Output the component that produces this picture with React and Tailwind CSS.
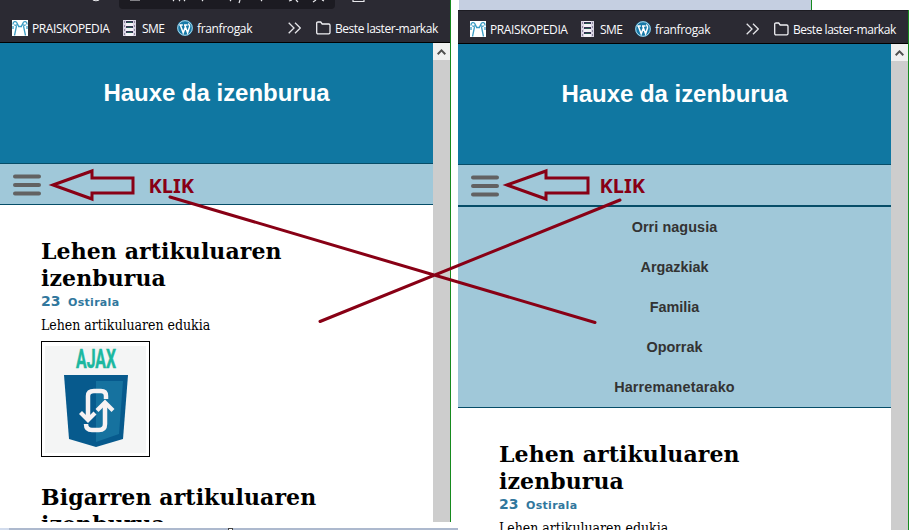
import React from "react";

function Praisko() {
  return (
    <svg width="16" height="16" viewBox="0 0 16 16" className="block shrink-0 bg-white" fill="none" stroke="#3b9cc4" strokeWidth="1.3">
      <path d="M1.200 4.500C.5 1.500 4 .5 5 3S3 6 2.500 4.500M5 3l1.500 3M4.500 6L2.500 15.500M14.800 4.500C15.500 1.500 12 .5 11 3s2 3 2.500 1.500M11 3L9.500 6M11.500 6l2 9.500M6 6.500h4M1 6v3M15 6v3" />
    </svg>
  );
}

function Sme() {
  return (
    <svg width="13" height="16" viewBox="0 0 13 16" className="block shrink-0">
      <path fill="#d9d4e3" d="M0 0h13v16H0z" />
      <path fill="#8f88a0" d="M1 1h1v2H1zM1 5h1v2H1zM1 9h1v2H1zM1 13h1v2H1zM11 1h1v2h-1zM11 5h1v2h-1zM11 9h1v2h-1zM11 13h1v2h-1z" />
      <path fill="#f4f2f7" d="M3 0h7v16H3z" />
      <path fill="#383254" d="M3 1h7v2H3zM3 6h7v2H3zM3 11h7v2H3z" />
      <path fill="#285c50" d="M4 2h5v1H4zM4 7h5v1H4zM4 12h5v1H4z" />
    </svg>
  );
}

function WordPress() {
  return (
    <svg width="16" height="16" viewBox="0 0 16 16" className="block shrink-0">
      <circle cx="8" cy="8" r="8" fill="#1679a8" />
      <circle cx="8" cy="8" r="7.3" fill="none" stroke="#d7edf6" strokeWidth=".8" />
      <path d="M2.300 5h3.500M7 5h3.500M3.300 5l2.900 7.800L8.200 7.500M7.700 5l2.900 7.800L12.500 7c.5-1.700-1-2.200-.8-3.600" fill="none" stroke="#fff" strokeWidth="1.500" />
    </svg>
  );
}

function Bookmarks() {
  return (
    <div className="flex h-[33px] shrink-0 items-center border-b border-black bg-[#2b2a33] pl-3 pt-1 font-['Open_Sans','Noto_Sans',sans-serif] text-[12px] leading-4 text-[#fbfbfe]">
      <Praisko />
      <span className="ml-1 w-[91px] shrink-0 whitespace-nowrap pt-[2px] tracking-[-0.4px]">PRAISKOPEDIA</span>
      <Sme />
      <span className="ml-[6px] w-[35px] shrink-0 whitespace-nowrap pt-[2px] tracking-[-0.5px]">SME</span>
      <WordPress />
      <span className="ml-1 w-[91px] shrink-0 whitespace-nowrap pt-[2px] tracking-[-0.35px]">franfrogak</span>
      <svg width="13" height="12" viewBox="0 0 13 12" className="mr-[15px] block shrink-0" fill="none" stroke="#e4e4e8" strokeWidth="1.300">
        <path d="M.7.7L6 6 .7 11.300M7 .7L12.300 6 7 11.300" />
      </svg>
      <svg width="15" height="14" viewBox="0 0 15 14" className="block shrink-0" fill="none" stroke="#f0f0f4" strokeWidth="1.300">
        <path d="M.7 11.500V2.200Q.7 1 2 1h2.700l1.500 2h6.500Q14 3 14 4.300v7.200q0 1.300-1.300 1.300H2Q.7 12.800.7 11.500z" />
      </svg>
      <span className="ml-1 whitespace-nowrap pt-[2px] tracking-[-0.46px]">Beste laster-markak</span>
    </div>
  );
}

function AddressBar() {
  return (
    <div className="flex h-[10px] shrink-0 bg-[#2b2a33]">
      <svg width="450" height="9" viewBox="0 0 450 9" className="block" fill="none" stroke="#e8e8ec" strokeWidth="1.200">
        <path d="M119 0h216v5q0 4-4 4H123q-4 0-4-4z" fill="#1c1b22" stroke="none" />
        <path d="M93 0q3 1.500 6 0M130 0h10M173 1l1-1M179 1l1-1M184 1l1-1M202 1l1-1M230 1l1-1M239 3l1-3M261 1l1-1M289 1l3-1M296 0l2 2M313 2l3-2M322 0l2 1M353 0v1.500h11V0" />
      </svg>
    </div>
  );
}

function Menu() {
  return (
    <div className="flex h-[200px] flex-col text-center font-['Liberation_Sans',Arial,sans-serif] text-[14.4px] font-bold leading-[40px] text-[#333]">
      <span className="tracking-[0.08px]">Orri nagusia</span>
      <span>Argazkiak</span>
      <span>Familia</span>
      <span>Oporrak</span>
      <span className="tracking-[0.15px]">Harremanetarako</span>
    </div>
  );
}

function Heading({ children }) {
  return (
    <h2 className="w-[300px] font-['DejaVu_Serif',Georgia,serif] text-[22px] font-bold leading-[27px] tracking-[0.1px] text-black">
      {children}
    </h2>
  );
}

function FirstArticle() {
  return (
    <div className="pl-[41px]">
      <Heading>
        Lehen artikuluaren
        <br />
        izenburua
      </Heading>
      <p className="flex h-[18px] items-baseline whitespace-nowrap font-['DejaVu_Sans',Verdana,sans-serif] font-bold leading-[18px] text-[#31779d]">
        <span className="w-[27px] text-[14px]">23</span>
        <span className="text-[11px] tracking-[0.3px]">Ostirala</span>
      </p>
      <p className="mt-[7px] whitespace-nowrap font-['DejaVu_Serif_Condensed','DejaVu_Serif',Georgia,serif] text-[14px] leading-[17px] tracking-[-0.03px] text-black [font-stretch:75%]">Lehen artikuluaren edukia</p>
    </div>
  );
}

function Ajax() {
  return (
    <div className="ml-[41px] mt-[7px] h-[116px] w-[109px] border border-black p-[3px]">
      <svg width="101" height="108" viewBox="0 0 101 108" className="block">
        <path fill="#f4f5f5" d="M0 1h101v107H0z" />
        <text x="31" y="23" fontFamily="Roboto, sans-serif" fontWeight="700" fontSize="26" textLength="40" lengthAdjust="spacingAndGlyphs" fill="#1cb8a0" stroke="#1cb8a0" strokeWidth=".5">AJAX</text>
        <path d="M19 30h64l-5 64-27 8-27-8z" fill="#075a8d" />
        <path d="M51 36h27l-4 53-23 8z" fill="#16729f" />
        <path d="M61 54v-3q0-5-5-5h-7q-6 0-6 5v22M41 79q0 6 6 6h7q6 0 6-6V59" fill="none" stroke="#f7f2f3" strokeWidth="4.500" />
        <path d="M35.500 67.500l7.500 7.500 7-7M52 65.500l8-8 8 8" fill="none" stroke="#f7f2f3" strokeWidth="4.200" />
      </svg>
    </div>
  );
}

function Scrollbar() {
  return (
    <div className="w-[17px] shrink-0 bg-[#cdcdcd]">
      <div className="flex h-[17px] items-center justify-center bg-[#f0f0f0]">
        <svg width="9" height="6" viewBox="0 0 9 6" fill="none" stroke="#505050" strokeWidth="2">
          <path d="M.7 5.200L4.500 1.400l3.800 3.800" />
        </svg>
      </div>
    </div>
  );
}

function Browser({ open }) {
  return (
    <div className={open ? "flex h-[520px] w-[451px] flex-col overflow-hidden border-r border-[#168a1e] bg-white" : "flex h-[522px] w-[451px] flex-col overflow-hidden border-r border-[#168a1e] bg-white"}>
      {open ? <div className="h-px shrink-0 bg-[#1c1b22]" /> : <AddressBar />}
      <Bookmarks />
      <div className="flex min-h-0 flex-1">
        <div className="h-full w-[433px] shrink-0 overflow-hidden">
          <header className="flex h-[121px] justify-center border-b border-[#064d68] bg-[#1077a1] pt-[36px] font-['Liberation_Sans',Arial,sans-serif] text-[24px] font-bold leading-[28px] text-white">
            <h1 className="whitespace-nowrap tracking-[-0.03px]">Hauxe da izenburua</h1>
          </header>
          <nav className="border-b border-[#064d68] bg-[#a0c8d9]">
            <div className={open ? "h-[42px] border-b-2 border-[#064d68] pl-[13px] pt-[10px]" : "h-[40px] pl-[13px] pt-[10px]"}>
              <svg width="28" height="22" viewBox="0 0 28 22" className="block" stroke="#626262" strokeWidth="4" strokeLinecap="round">
                <path d="M2 2.600h24M2 11h24M2 19.400h24" />
              </svg>
            </div>
            {open && <Menu />}
          </nav>
          <div className="h-[33px]" />
          <FirstArticle />
          {!open && (
            <>
              <Ajax />
              <div className="mt-[27px] pl-[41px]">
                <Heading>
                  Bigarren artikuluaren
                  <br />
                  izenburua
                </Heading>
              </div>
            </>
          )}
        </div>
        <Scrollbar />
      </div>
    </div>
  );
}

function Annotations() {
  return (
    <svg width="910" height="530" viewBox="0 0 910 530" className="pointer-events-none absolute left-0 top-0" fill="none" stroke="#880015" strokeWidth="3">
      <path d="M53 185l39-14v7h41v15H92v6zM507 185l39-14v7h42v15h-42v6z" />
      <path strokeLinecap="round" d="M170 197L595 322.500M620 200L320 321.500" />
      <g fill="#880015" stroke="none" fontFamily="'Noto Sans', sans-serif" fontSize="19" fontWeight="700">
        <text x="148.500" y="193" textLength="45.500" lengthAdjust="spacingAndGlyphs">KLIK</text>
        <text x="599.500" y="193" textLength="45.500" lengthAdjust="spacingAndGlyphs">KLIK</text>
      </g>
    </svg>
  );
}

export default function App() {
  return (
    <main className="relative flex h-[530px] w-[910px] overflow-hidden bg-white">
      <div className="flex w-[458px] shrink-0 flex-col justify-between">
        <Browser open={false} />
        <div className="flex h-[2px] bg-[#adb9ce]">
          <div className="w-[9px] bg-[#d2dced]" />
          <div className="ml-[219px] w-[5px] border-x border-t border-[#444] bg-white" />
        </div>
      </div>
      <div className="flex w-[452px] flex-col">
        <div className="flex h-[10px] shrink-0">
          <div className="ml-px w-[353px] border-r border-[#168a1e] bg-[#c5cfe1]" />
        </div>
        <Browser open />
      </div>
      <Annotations />
    </main>
  );
}
